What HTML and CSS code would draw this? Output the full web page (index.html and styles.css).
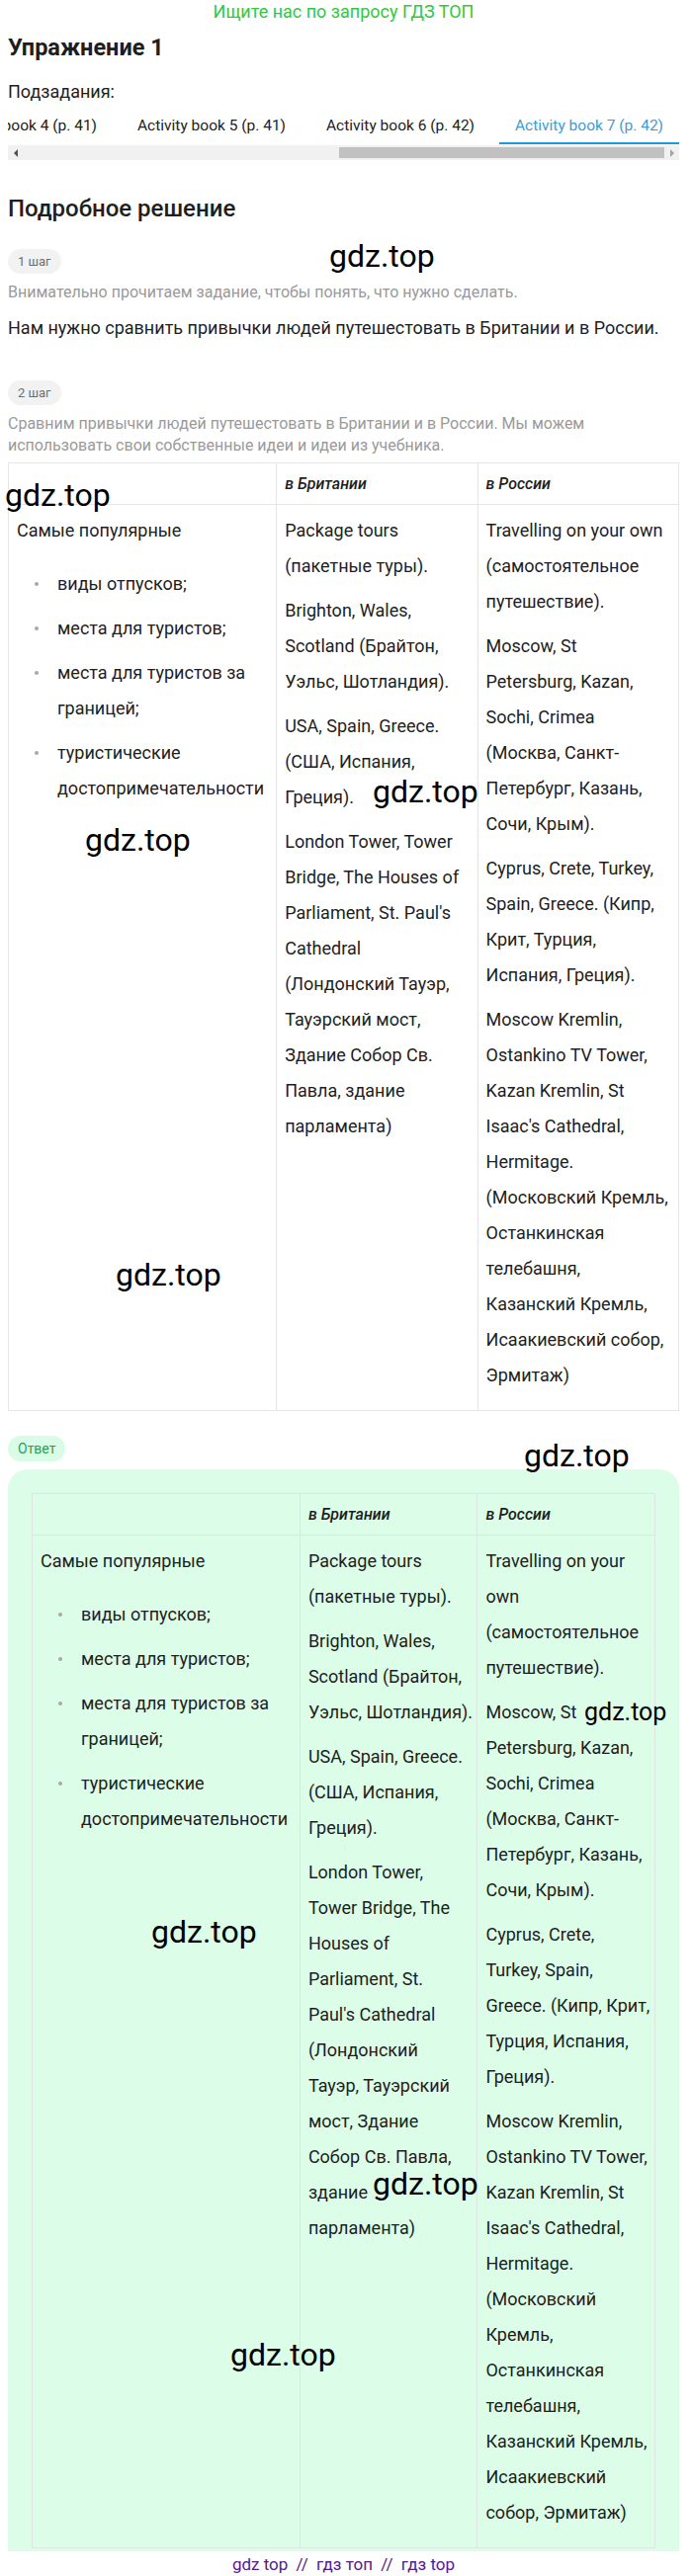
FILE: index.html
```html
<!DOCTYPE html>
<html lang="ru">
<head>
  <meta charset="UTF-8">
  <meta name="viewport" content="width=device-width, initial-scale=1.0">
  <title>Упражнение 1</title>
  <link rel="stylesheet" href="styles.css">
</head>
<body>
<div class="page">
  <p class="promo">Ищите нас по запросу ГДЗ ТОП</p>
  <h1 class="title">Упражнение 1</h1>

  <div class="subtasks">
    <div class="subtasks-label">Подзадания:</div>
    <div class="tabs">
      <a class="tab">Activity book 4 (p. 41)</a>
      <a class="tab">Activity book 5 (p. 41)</a>
      <a class="tab">Activity book 6 (p. 42)</a>
      <a class="tab tab-active">Activity book 7 (p. 42)</a>
    </div>
    <div class="scrollbar">
      <span class="arrow arrow-left"></span>
      <span class="track"><span class="thumb"></span></span>
      <span class="arrow arrow-right"></span>
    </div>
  </div>

  <h2 class="section-title">Подробное решение</h2>

  <div class="step">
    <span class="pill">1 шаг</span>
    <p class="step-hint">Внимательно прочитаем задание, чтобы понять, что нужно сделать.</p>
    <p class="step-text">Нам нужно сравнить привычки людей путешестовать в Британии и в России.</p>
  </div>

  <div class="step step-second">
    <span class="pill">2 шаг</span>
    <p class="step-hint">Сравним привычки людей путешестовать в Британии и в России. Мы можем использовать свои собственные идеи и идеи из учебника.</p>

    <table class="compare">
      <colgroup>
        <col class="col-topic">
        <col class="col-uk">
        <col class="col-ru">
      </colgroup>
      <thead>
        <tr>
          <th></th>
          <th>в Британии</th>
          <th>в России</th>
        </tr>
      </thead>
      <tbody>
        <tr>
          <td>
            <p>Самые популярные</p>
            <ul>
              <li>виды отпусков;</li>
              <li>места для туристов;</li>
              <li>места для туристов за<br>границей;</li>
              <li>туристические<br>достопримечательности</li>
            </ul>
          </td>
          <td>
            <p>Package tours<br>(пакетные туры).</p>
            <p>Brighton, Wales,<br>Scotland (Брайтон,<br>Уэльс, Шотландия).</p>
            <p>USA, Spain, Greece.<br>(США, Испания,<br>Греция).</p>
            <p>London Tower, Tower<br>Bridge, The Houses of<br>Parliament, St. Paul's<br>Cathedral<br>(Лондонский Тауэр,<br>Тауэрский мост,<br>Здание Собор Св.<br>Павла, здание<br>парламента)</p>
          </td>
          <td>
            <p>Travelling on your own<br>(самостоятельное<br>путешествие).</p>
            <p>Moscow, St<br>Petersburg, Kazan,<br>Sochi, Crimea<br>(Москва, Санкт-<br>Петербург, Казань,<br>Сочи, Крым).</p>
            <p>Cyprus, Crete, Turkey,<br>Spain, Greece. (Кипр,<br>Крит, Турция,<br>Испания, Греция).</p>
            <p>Moscow Kremlin,<br>Ostankino TV Tower,<br>Kazan Kremlin, St<br>Isaac's Cathedral,<br>Hermitage.<br>(Московский Кремль,<br>Останкинская<br>телебашня,<br>Казанский Кремль,<br>Исаакиевский собор,<br>Эрмитаж)</p>
          </td>
        </tr>
      </tbody>
    </table>
  </div>

  <span class="pill pill-answer">Ответ</span>
  <div class="answer">
    <table class="compare compare-answer">
      <colgroup>
        <col class="col-topic">
        <col class="col-uk">
        <col class="col-ru">
      </colgroup>
      <thead>
        <tr>
          <th></th>
          <th>в Британии</th>
          <th>в России</th>
        </tr>
      </thead>
      <tbody>
        <tr>
          <td>
            <p>Самые популярные</p>
            <ul>
              <li>виды отпусков;</li>
              <li>места для туристов;</li>
              <li>места для туристов за<br>границей;</li>
              <li>туристические<br>достопримечательности</li>
            </ul>
          </td>
          <td>
            <p>Package tours<br>(пакетные туры).</p>
            <p>Brighton, Wales,<br>Scotland (Брайтон,<br>Уэльс, Шотландия).</p>
            <p>USA, Spain, Greece.<br>(США, Испания,<br>Греция).</p>
            <p>London Tower,<br>Tower Bridge, The<br>Houses of<br>Parliament, St.<br>Paul's Cathedral<br>(Лондонский<br>Тауэр, Тауэрский<br>мост, Здание<br>Собор Св. Павла,<br>здание<br>парламента)</p>
          </td>
          <td>
            <p>Travelling on your<br>own<br>(самостоятельное<br>путешествие).</p>
            <p>Moscow, St<br>Petersburg, Kazan,<br>Sochi, Crimea<br>(Москва, Санкт-<br>Петербург, Казань,<br>Сочи, Крым).</p>
            <p>Cyprus, Crete,<br>Turkey, Spain,<br>Greece. (Кипр, Крит,<br>Турция, Испания,<br>Греция).</p>
            <p>Moscow Kremlin,<br>Ostankino TV Tower,<br>Kazan Kremlin, St<br>Isaac's Cathedral,<br>Hermitage.<br>(Московский<br>Кремль,<br>Останкинская<br>телебашня,<br>Казанский Кремль,<br>Исаакиевский<br>собор, Эрмитаж)</p>
          </td>
        </tr>
      </tbody>
    </table>
  </div>

  <div class="footer"><a>gdz top</a> // <a>гдз топ</a> // <a>гдз top</a></div>

  <!-- водяные знаки поверх контента -->
  <span class="wm wm-1">gdz.top</span>
  <span class="wm wm-2">gdz.top</span>
  <span class="wm wm-3">gdz.top</span>
  <span class="wm wm-4">gdz.top</span>
  <span class="wm wm-5">gdz.top</span>
  <span class="wm wm-6">gdz.top</span>
  <span class="wm wm-7">gdz.top</span>
  <span class="wm wm-8">gdz.top</span>
  <span class="wm wm-9">gdz.top</span>
  <span class="wm wm-10">gdz.top</span>
</div>
</body>
</html>
```

FILE: styles.css
```css
body {
  margin: 0;
  background: #fff;
  color: #1e1e1e;
  font-family: Roboto, "Liberation Sans", sans-serif;
}

.page {
  position: relative;
  padding: 0 13px 0 8px;
}

.promo {
  margin: 0;
  text-align: center;
  color: #34c83c;
  font-size: 18px;
  line-height: 24px;
}

.title {
  margin: 9px 0 0;
  font-size: 23.5px;
  line-height: 30px;
  font-weight: 700;
}

/* подзадания */
.subtasks-label {
  margin-top: 18px;
  font-size: 18px;
  line-height: 24px;
}

.tabs {
  display: flex;
  justify-content: flex-end;
  gap: 9px;
  margin-top: 4px;
  overflow: hidden;
}

.tab {
  flex-shrink: 0;
  padding: 7px 16px 6px;
  font-size: 15.5px;
  line-height: 22px;
  color: #222;
  border-bottom: 2px solid transparent;
  white-space: nowrap;
}

.tab-active {
  color: #3f9bd3;
  border-bottom-color: #1a9be0;
}

.scrollbar {
  display: flex;
  height: 15px;
  margin-top: 1px;
  background: #f1f1f1;
}

.arrow {
  width: 15px;
  display: flex;
  align-items: center;
  justify-content: center;
}

.arrow::before {
  content: "";
  border-top: 4px solid transparent;
  border-bottom: 4px solid transparent;
}

.arrow-left::before {
  border-right: 4px solid #505050;
}

.arrow-right::before {
  border-left: 4px solid #a3a3a3;
}

.track {
  flex: 1;
  display: flex;
  justify-content: flex-end;
  padding: 2px 0;
}

.thumb {
  width: 329px;
  background: #c1c1c1;
}

/* решение */
.section-title {
  margin: 35px 0 0;
  font-size: 24px;
  line-height: 28px;
  font-weight: 500;
}

.pill {
  display: inline-block;
  height: 25px;
  padding: 0 10px;
  border-radius: 13px;
  background: #f2f2f2;
  color: #6f6f6f;
  font-size: 13px;
  line-height: 25px;
}

.step {
  margin-top: 27px;
}

.step-second {
  margin-top: 40px;
}

.step-hint {
  margin: 8px 0 0;
  color: #9a9a9a;
  font-size: 16px;
  line-height: 22px;
}

.step-text {
  margin: 12px 0 0;
  font-size: 18px;
  line-height: 26px;
}

/* таблицы */
.compare {
  width: 100%;
  margin-top: 6px;
  border-collapse: collapse;
  table-layout: fixed;
}

.col-topic { width: 40%; }
.col-uk { width: 30%; }
.col-ru { width: 30%; }

.compare th,
.compare td {
  border: 1px solid #e6e6e6;
  padding: 8px;
  text-align: left;
  vertical-align: top;
  white-space: nowrap;
}

.compare th {
  font-size: 16px;
  line-height: 25px;
  font-style: italic;
  font-weight: 500;
}

.compare td {
  font-size: 18px;
  line-height: 36px;
}

.compare p {
  margin: 0 0 9px;
}

.compare ul {
  margin: 18px 0 0;
  padding-left: 41px;
  list-style: none;
}

.compare li {
  position: relative;
  margin-bottom: 9px;
}

.compare li::before {
  content: "";
  position: absolute;
  left: -23px;
  top: 16px;
  width: 4px;
  height: 4px;
  border-radius: 50%;
  background: #a8a8a8;
}

/* ответ */
.pill-answer {
  margin-top: 25px;
  height: 26px;
  line-height: 26px;
  background: #d9fce6;
  color: #2e9c55;
  font-size: 14px;
}

.answer {
  margin-top: 8px;
  padding: 24px 24px 3px;
  border-radius: 20px 20px 0 0;
  background: #dcfde8;
}

.compare-answer {
  margin-top: 0;
}

.compare-answer .col-topic { width: 43%; }
.compare-answer .col-uk { width: 28.5%; }
.compare-answer .col-ru { width: 28.5%; }

.compare-answer th,
.compare-answer td {
  border-color: #dde6e0;
}

.footer {
  text-align: center;
  font-size: 17px;
  line-height: 26px;
  color: #551a8b;
}

.footer a {
  margin: 0 4px;
  color: #551a8b;
}

/* водяные знаки */
.wm {
  position: absolute;
  font-family: Roboto, sans-serif;
  font-size: 32px;
  line-height: 32px;
  color: #000;
  white-space: nowrap;
}

.wm-1 { left: 333px; top: 243px; }
.wm-2 { left: 5px; top: 485px; }
.wm-3 { left: 377px; top: 785px; }
.wm-4 { left: 86px; top: 834px; }
.wm-5 { left: 117px; top: 1274px; }
.wm-6 { left: 530px; top: 1457px; }
.wm-7 { left: 591px; top: 1720px; font-size: 25px; line-height: 25px; }
.wm-8 { left: 153px; top: 1939px; }
.wm-9 { left: 377px; top: 2194px; }
.wm-10 { left: 233px; top: 2367px; }
```
